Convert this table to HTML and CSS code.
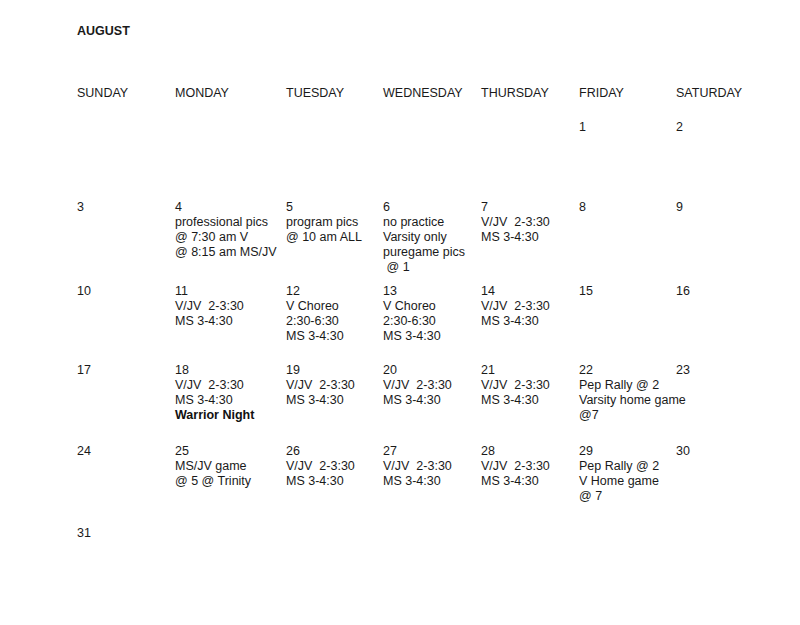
FILE: index.html
```html
<!DOCTYPE html>
<html lang="en">
<head>
<meta charset="utf-8">
<title>August</title>
<link rel="stylesheet" href="styles.css">
</head>
<body>
<div class="page">
  <div class="month">AUGUST</div>
  <div class="cal">
    <div class="row head">
      <div class="cell">SUNDAY</div>
      <div class="cell">MONDAY</div>
      <div class="cell">TUESDAY</div>
      <div class="cell">WEDNESDAY</div>
      <div class="cell">THURSDAY</div>
      <div class="cell">FRIDAY</div>
      <div class="cell">SATURDAY</div>
    </div>
    <div class="row w1">
      <div class="cell"></div>
      <div class="cell"></div>
      <div class="cell"></div>
      <div class="cell"></div>
      <div class="cell"></div>
      <div class="cell"><span class="ln">1</span></div>
      <div class="cell"><span class="ln">2</span></div>
    </div>
    <div class="row w2">
      <div class="cell"><span class="ln">3</span></div>
      <div class="cell"><span class="ln">4</span><span class="ln">professional pics</span><span class="ln">@ 7:30 am V</span><span class="ln">@ 8:15 am MS/JV</span></div>
      <div class="cell"><span class="ln">5</span><span class="ln">program pics</span><span class="ln">@ 10 am ALL</span></div>
      <div class="cell"><span class="ln">6</span><span class="ln">no practice</span><span class="ln">Varsity only</span><span class="ln">puregame pics</span><span class="ln"> @ 1</span></div>
      <div class="cell"><span class="ln">7</span><span class="ln">V/JV  2-3:30</span><span class="ln">MS 3-4:30</span></div>
      <div class="cell"><span class="ln">8</span></div>
      <div class="cell"><span class="ln">9</span></div>
    </div>
    <div class="row w3">
      <div class="cell"><span class="ln">10</span></div>
      <div class="cell"><span class="ln">11</span><span class="ln">V/JV  2-3:30</span><span class="ln">MS 3-4:30</span></div>
      <div class="cell"><span class="ln">12</span><span class="ln">V Choreo</span><span class="ln">2:30-6:30</span><span class="ln">MS 3-4:30</span></div>
      <div class="cell"><span class="ln">13</span><span class="ln">V Choreo</span><span class="ln">2:30-6:30</span><span class="ln">MS 3-4:30</span></div>
      <div class="cell"><span class="ln">14</span><span class="ln">V/JV  2-3:30</span><span class="ln">MS 3-4:30</span></div>
      <div class="cell"><span class="ln">15</span></div>
      <div class="cell"><span class="ln">16</span></div>
    </div>
    <div class="row w4">
      <div class="cell"><span class="ln">17</span></div>
      <div class="cell"><span class="ln">18</span><span class="ln">V/JV  2-3:30</span><span class="ln">MS 3-4:30</span><b class="ln strong">Warrior Night</b></div>
      <div class="cell"><span class="ln">19</span><span class="ln">V/JV  2-3:30</span><span class="ln">MS 3-4:30</span></div>
      <div class="cell"><span class="ln">20</span><span class="ln">V/JV  2-3:30</span><span class="ln">MS 3-4:30</span></div>
      <div class="cell"><span class="ln">21</span><span class="ln">V/JV  2-3:30</span><span class="ln">MS 3-4:30</span></div>
      <div class="cell"><span class="ln">22</span><span class="ln">Pep Rally @ 2</span><span class="ln">Varsity home game</span><span class="ln">@7</span></div>
      <div class="cell"><span class="ln">23</span></div>
    </div>
    <div class="row w5">
      <div class="cell"><span class="ln">24</span></div>
      <div class="cell"><span class="ln">25</span><span class="ln">MS/JV game</span><span class="ln">@ 5 @ Trinity</span></div>
      <div class="cell"><span class="ln">26</span><span class="ln">V/JV  2-3:30</span><span class="ln">MS 3-4:30</span></div>
      <div class="cell"><span class="ln">27</span><span class="ln">V/JV  2-3:30</span><span class="ln">MS 3-4:30</span></div>
      <div class="cell"><span class="ln">28</span><span class="ln">V/JV  2-3:30</span><span class="ln">MS 3-4:30</span></div>
      <div class="cell"><span class="ln">29</span><span class="ln">Pep Rally @ 2</span><span class="ln">V Home game</span><span class="ln">@ 7</span></div>
      <div class="cell"><span class="ln">30</span></div>
    </div>
    <div class="row w6">
      <div class="cell"><span class="ln">31</span></div>
    </div>
  </div>
</div>
</body>
</html>
```
FILE: styles.css
```css
html, body {
  margin: 0;
  padding: 0;
  background: #ffffff;
}
.page {
  width: 800px;
  height: 625px;
  box-sizing: border-box;
  padding: 24px 0 0 77px;
  font-family: "Liberation Sans", Arial, sans-serif;
  font-size: 12.5px;
  line-height: 15px;
  color: #1a1a1a;
}
.month {
  font-weight: bold;
  height: 15px;
}
.cal {
  margin-top: 47px;
  display: flex;
  flex-direction: column;
}
.row {
  display: grid;
  grid-template-columns: 98px 111px 97px 98px 98px 97px 100px;
}
.cell {
  display: flex;
  flex-direction: column;
  align-items: flex-start;
}
.ln {
  display: block;
  white-space: pre;
}
.head { height: 34px; }
.w1 { height: 80px; }
.w2 { height: 84px; }
.w3 { height: 79px; }
.w4 { height: 81px; }
.w5 { height: 82px; }
.w6 { height: 30px; }
.strong {
  font-weight: bold;
  color: #111;
}
```
